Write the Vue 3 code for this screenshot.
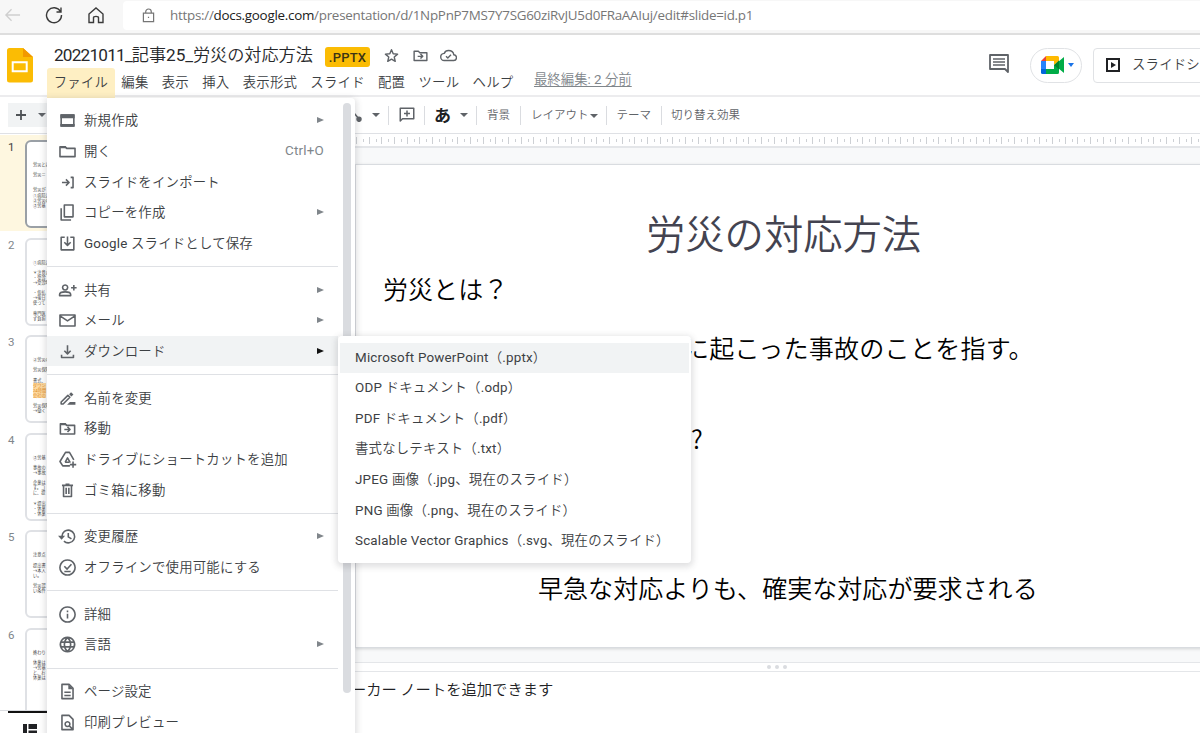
<script setup>
  /**
  * Presentation editor with the File menu open
  *
  * Browser bar, document header, toolbar, filmstrip and slide canvas.
  * The File menu and its Download submenu lie over the page.
  */

  // Outline icons on a 24px grid, `s` is stroked and `f` is filled
  const icons = {
    window: { s: 'M4 5h16v14H4z', f: 'M3 4h18v5H3zM3 16.500h18V20H3z' },
    folder: { s: 'M2.500 18.500V6h6.500l2 2h10.500v10.500z', f: 'M3 5h6.500l2 3H3z' },
    import: { s: 'M5 12h8.500M10 8l4 4-4 4M16 5.500h3v13H16' },
    copy: { s: 'M8 2.500h11v15H8zM4 6.500V21.500h12.500' },
    save: { s: 'M8.500 4H4v16h16V4h-4.500M12 3v11M8 10.500l4 4 4-4' },
    share: { s: 'M9 5a3.200 3.200 0 1 0 .01 0zM2 18.500v-1.500c0-2.500 4-3.300 7-3.300s7 .8 7 3.300v1.500zM20 5v7M16.500 8.500h7' },
    mail: { s: 'M2.500 5h19v14h-19zM3 6.500l9 6 9-6' },
    download: { s: 'M12 4v10.500M8 11l4 4 4-4M4.500 16V19.500h15V16' },
    rename: { s: 'M4 19v-2.500L12.500 8l2.500 2.500L6.500 19z', f: 'M14 6.500l2.500-2.500L19.500 7 17 9.500zM11.500 20h10.500v-3.500h-7z' },
    move: { s: 'M3 19V6h6l2 2h10v11zM8 13.200h6.500M12 10l3.200 3.200-3.200 3.200', f: 'M3 5h6.500l2 3H3z' },
    shortcut: { s: 'M15 20H6l-3.500-5.500L9.500 3h5l5.500 9.500M9 15.500h5M9 15.500l3-5.500 3.500 6M19 14.500v8M15 18.500h8' },
    trash: { s: 'M7 5.500v14h10v-14M5 5.500h14M9.500 4h5M10.300 8.500v8M13.700 8.500v8' },
    history: { s: 'M5 12a8 8 0 1 1 2.500 5.800M13 7.500v5l4 2.500', f: 'M0 11h9l-4.500 5z' },
    offline: { s: 'M12 2.500a9.500 9.500 0 1 0 .01 0zM8 10.500l3.500 3.500L17 8M8 17h8' },
    info: { s: 'M12 2.500a9.500 9.500 0 1 0 .01 0zM12 11v6M12 7v2' },
    globe: { s: 'M12 3a9 9 0 1 0 .01 0zM12 3c-5.300 5-5.300 13 0 18M12 3c5.300 5 5.300 13 0 18M4 9h16M4 15h16' },
    page: { s: 'M5 3h9l5 5v13H5zM8 13h8M8 17h8', f: 'M13 3v6h6z' },
    preview: { s: 'M5 3h9l5 5v13H5zM12 11a3 3 0 1 0 .01 0zM14 16l4.500 4.500' },
    star: { s: 'M12 3.800l2.400 5.800 6.200.500-4.700 4.100 1.400 6.100L12 17.100l-5.300 3.200 1.400-6.100-4.700-4.100 6.200-.500z' },
    cloud: { s: 'M6 19h13a4 4 0 0 0 .500-8C19 7.500 16 5 12 5c-2.800 0-5 1.600-6 4-2.800.300-5 2.300-5 5s2.200 5 5 5zM8.500 13l2.500 2.500 4.500-4.500' },
    addComment: { s: 'M3 3h18v14H6l-3 3zM12 6v8M8 10h8' }
  };

  const menus = ['ファイル', '編集', '表示', '挿入', '表示形式', 'スライド', '配置', 'ツール', 'ヘルプ'];

  const fileMenu = [
    [
      { icon: 'window', label: '新規作成', sub: true },
      { icon: 'folder', label: '開く', keys: 'Ctrl+O' },
      { icon: 'import', label: 'スライドをインポート' },
      { icon: 'copy', label: 'コピーを作成', sub: true },
      { icon: 'save', label: 'Google スライドとして保存' }
    ],
    [
      { icon: 'share', label: '共有', sub: true },
      { icon: 'mail', label: 'メール', sub: true },
      { icon: 'download', label: 'ダウンロード', sub: true, active: true }
    ],
    [
      { icon: 'rename', label: '名前を変更' },
      { icon: 'move', label: '移動' },
      { icon: 'shortcut', label: 'ドライブにショートカットを追加' },
      { icon: 'trash', label: 'ゴミ箱に移動' }
    ],
    [
      { icon: 'history', label: '変更履歴', sub: true },
      { icon: 'offline', label: 'オフラインで使用可能にする' }
    ],
    [
      { icon: 'info', label: '詳細' },
      { icon: 'globe', label: '言語', sub: true }
    ],
    [
      { icon: 'page', label: 'ページ設定' },
      { icon: 'preview', label: '印刷プレビュー' }
    ]
  ];

  const formats = [
    'Microsoft PowerPoint（.pptx）',
    'ODP ドキュメント（.odp）',
    'PDF ドキュメント（.pdf）',
    '書式なしテキスト（.txt）',
    'JPEG 画像（.jpg、現在のスライド）',
    'PNG 画像（.png、現在のスライド）',
    'Scalable Vector Graphics（.svg、現在のスライド）'
  ];

  // Lines starting with * are highlighted in the thumbnail
  const thumbs = [
    ['労災とは', '', '労災＝', '', '', '労災が', '①病院に', '②労災の', '③労基'],
    ['①病院に', '', '＊注意点', '・受診', '→受診時', '', '・仮払', '→後日', '使って', '', '専門医', 'ず負担'],
    ['②労災の', '', '労災保険', '', '書式、', '*ダウン', '*24時間', '*会社の', '', '労災保険', '→働く'],
    ['③労基', '', '事故の', '→事故', '', '企業は', 'す。コ', 'に、提', '', '＊提出', '・休業', '・休業'],
    ['注意点', '', '提出書', '→本人', 'い。', '', '労災認', 'い条件'],
    ['終わり', '', '休業は', '→労基', 'と、お', '休業は']
  ];
</script>

<template>
  <div class="screen">
    <!-- Browser bar -->
    <div class="browser">
      <svg class="nav back" viewBox="0 0 18 18"><path d="M17 9H2M8 3L2 9l6 6" /></svg>
      <svg class="nav reload" viewBox="0 0 18 18"><path d="M15.500 5.500A7.500 7.500 0 1 0 16.500 9M16 1.500v4.500h-4.500" /></svg>
      <svg class="nav home" viewBox="0 0 18 18"><path d="M2 8l7-6 7 6v8.500h-4.500v-5c0-1.500-5-1.500-5 0v5H2z" /></svg>
      <div class="address">
        <svg class="lock" viewBox="0 0 14 16"><path d="M1.500 5.500h11v9h-11zM4 5.500V4a3 3 0 0 1 6 0v1.500M7 9.300v1.500" /></svg>
        <span class="url">https://<b>docs.google.com</b>/presentation/d/1NpPnP7MS7Y7SG60ziRvJU5d0FRaAAIuj/edit#slide=id.p1</span>
      </div>
    </div>

    <!-- Document header -->
    <header class="header">
      <svg class="logo" viewBox="0 0 26 35">
        <path fill="#fbbc04" d="M2.500 0H16l10 9v23a2.500 2.500 0 0 1-2.500 2.500h-21A2.500 2.500 0 0 1 0 32V2.500A2.500 2.500 0 0 1 2.500 0z" />
        <path fill="#f29900" d="M16 0l10 9H16z" />
        <path fill="none" stroke="#fff" stroke-width="2" d="M5.700 14.200h14v9h-14z" />
      </svg>
      <div class="doc">
        <div class="title-row">
          <span class="title"><span class="date">20221011_</span>記事25_労災の対応方法</span>
          <span class="badge">.PPTX</span>
          <svg v-for="name in ['star', 'move', 'cloud']" :key="name" class="icon small" viewBox="0 0 24 24">
            <path class="line" :d="icons[name].s" />
          </svg>
        </div>
        <nav class="menubar">
          <span v-for="(menu, i) in menus" :key="menu" class="menu" :class="{ open: i === 0 }">{{ menu }}</span>
          <span class="last-edit">最終編集: 2 分前</span>
        </nav>
      </div>
      <div class="actions">
        <svg class="comments" viewBox="0 0 20 20">
          <path fill="none" stroke="#5f6368" stroke-width="1.800" stroke-linejoin="round" d="M1 1h18v17l-3-3H1z" />
          <path stroke="#5f6368" stroke-width="1.700" d="M4 5h12M4 8h12M4 11h12" />
        </svg>
        <div class="meet">
          <svg viewBox="0 0 24 20">
            <path fill="#ea4335" d="M6 1v5H1z" />
            <path fill="#2684fc" d="M1 6h5v8H1z" />
            <path fill="#0066da" d="M1 14h5v5H2.500A1.500 1.500 0 0 1 1 17.500z" />
            <path fill="#ffba00" d="M6 1h11.500A1.500 1.500 0 0 1 19 2.500V6l-5 4V6H6z" />
            <path fill="#00ac47" d="M6 14h8v-4l5-1v8.500a1.500 1.500 0 0 1-1.500 1.500H6zM18 7l6-5v16l-6-5z" />
            <path fill="#00832d" d="M14 10l5-4.500v9z" />
          </svg>
          <i class="caret blue"></i>
        </div>
        <div class="slideshow">
          <svg viewBox="0 0 16 16">
            <path fill="none" stroke="#202124" stroke-width="2" d="M2 2h12v12H2z" />
            <path fill="#202124" d="M6 5l5 3-5 3z" />
          </svg>
          <span>スライドショー</span>
        </div>
      </div>
    </header>

    <!-- Toolbar -->
    <div class="toolbar">
      <div class="new-slide">
        <svg viewBox="0 0 12 12"><path d="M6 1v10M1 6h10" /></svg>
        <i class="caret"></i>
      </div>
      <div class="tools">
        <svg class="tail" viewBox="0 0 8 10"><path d="M0 1l5 6" /><circle cx="5" cy="7.300" r="2" /></svg>
        <i class="caret line-caret"></i>
        <i class="rule"></i>
        <svg class="icon add-comment" viewBox="0 0 24 24"><path class="line" :d="icons.addComment.s" /></svg>
        <i class="rule"></i>
        <span class="kana">あ</span>
        <i class="caret kana-caret"></i>
        <i class="rule"></i>
        <span class="tool">背景</span>
        <i class="rule"></i>
        <span class="tool layout">レイアウト<i class="caret"></i></span>
        <i class="rule"></i>
        <span class="tool">テーマ</span>
        <i class="rule"></i>
        <span class="tool last">切り替え効果</span>
      </div>
    </div>

    <div class="work">
      <!-- Filmstrip -->
      <aside class="film">
        <div class="film-list">
          <div v-for="(lines, i) in thumbs" :key="i" class="film-row" :class="{ current: i === 0 }">
            <span class="num">{{ i + 1 }}</span>
            <div class="thumb">
              <div v-for="(text, n) in lines" :key="n" class="thumb-line">
                <span :class="{ marked: text[0] === '*' }">{{ text.replace('*', '') }}</span>
              </div>
            </div>
          </div>
        </div>
        <div class="film-foot">
          <div class="view-tab">
            <svg viewBox="0 0 14 12"><path d="M0 0h4v12H0zM5.500 0H14v5H5.500zM5.500 6.500H14V12H5.500z" /></svg>
          </div>
        </div>
      </aside>

      <!-- Slide canvas -->
      <main class="stage">
        <div class="ruler"></div>
        <div class="canvas">
          <div class="slide">
            <h1>労災の対応方法</h1>
            <p class="what">労災とは？</p>
            <p class="about">に起こった事故のことを指す。</p>
            <p class="question">?</p>
            <p class="closing">早急な対応よりも、確実な対応が要求される</p>
          </div>
        </div>
        <div class="handle"><i></i><i></i><i></i></div>
        <div class="notes">ーカー ノートを追加できます</div>
      </main>
    </div>

    <!-- File menu -->
    <div class="file-menu">
      <div v-for="(group, g) in fileMenu" :key="g" class="group">
        <div v-for="item in group" :key="item.label" class="item" :class="{ active: item.active }">
          <svg class="icon" viewBox="0 0 24 24">
            <path class="line" :d="icons[item.icon].s" />
            <path v-if="icons[item.icon].f" class="solid" :d="icons[item.icon].f" />
          </svg>
          <span class="label">{{ item.label }}</span>
          <span v-if="item.keys" class="keys">{{ item.keys }}</span>
          <i v-if="item.sub" class="arrow"></i>
        </div>
      </div>
      <div class="scrollbar"></div>
    </div>

    <!-- Download submenu -->
    <div class="submenu">
      <div v-for="(format, i) in formats" :key="format" class="format" :class="{ active: i === 0 }">{{ format }}</div>
    </div>
  </div>
</template>

<style>
  body {
    margin: 0;
    overflow: hidden;
  }
</style>

<style scoped>
  .screen {
    position: relative;
    display: flex;
    flex-direction: column;
    width: 1200px;
    height: 733px;
    overflow: hidden;
    background: #fff;
    color: #3c4043;
    font-family: Roboto, "Noto Sans CJK JP DemiLight", "Noto Sans CJK JP", sans-serif;
    font-size: 13.4px;
    letter-spacing: 0.2px;
    white-space: nowrap;
  }

  .screen * {
    box-sizing: border-box;
  }

  svg {
    display: block;
    flex: none;
  }

  /* Browser bar */
  .browser {
    display: flex;
    align-items: flex-start;
    flex: none;
    height: 35px;
    padding-left: 4px;
    background: #f7f7f7;
    border-bottom: 2px solid #dedede;
  }

  .nav {
    width: 18px;
    height: 18px;
    margin-top: 6px;
    fill: none;
    stroke: #3b3b3b;
    stroke-width: 1.4;
  }

  .back {
    width: 17px;
    stroke: #cfcfcf;
  }

  .reload {
    margin-left: 24px;
  }

  .home {
    margin-left: 24px;
  }

  .address {
    display: flex;
    align-items: center;
    flex: 1;
    height: 29px;
    margin: 1px 0 0 18px;
    padding-left: 19px;
    background: #fff;
    border-radius: 4px 0 0 4px;
  }

  .lock {
    width: 13px;
    height: 15px;
    margin-top: -1px;
    fill: none;
    stroke: #767676;
    stroke-width: 1.3;
  }

  .url {
    margin: -2px 0 0 15px;
    color: #767676;
    font-family: "Open Sans", sans-serif;
    font-size: 13.4px;
    letter-spacing: -0.265px;
  }

  .url b {
    color: #202020;
    font-weight: 400;
  }

  /* Header */
  .header {
    display: flex;
    flex: none;
    height: 62px;
    padding-left: 7px;
    border-bottom: 2px solid #ececee;
  }

  .logo {
    width: 26px;
    height: 35px;
    margin-top: 13px;
  }

  .doc {
    margin-left: 14px;
  }

  .title-row {
    display: flex;
    align-items: center;
    height: 26px;
    margin-top: 8px;
    padding-left: 7px;
  }

  .title {
    width: 259px;
    margin-top: -2px;
    color: #27282b;
    font-size: 17.2px;
    line-height: 26px;
    letter-spacing: -0.07px;
  }

  .date {
    letter-spacing: -0.8px;
  }

  .badge {
    width: 45px;
    height: 20px;
    margin: 1px 13px 0 12px;
    background: #fbbc04;
    border-radius: 3px;
    color: #3c3415;
    font-size: 13px;
    font-weight: 500;
    line-height: 21px;
    text-align: center;
  }

  .icon {
    width: 19px;
    height: 19px;
  }

  .icon .line {
    fill: none;
    stroke: #5f6368;
    stroke-linejoin: round;
    stroke-width: 2;
  }

  .icon .solid {
    fill: #5f6368;
  }

  .small {
    width: 17px;
    height: 17px;
    margin: -2px 11.600px 0 0;
  }

  .menubar {
    display: flex;
    height: 30px;
    margin-top: -1px;
  }

  .menu {
    padding: 0 6.650px;
    line-height: 29px;
  }

  .menu.open {
    background: #feefc3;
    border-radius: 3px 3px 0 0;
  }

  .last-edit {
    margin-left: 14px;
    color: #80868b;
    line-height: 23px;
    letter-spacing: 0;
    text-decoration: underline;
    text-underline-offset: 2px;
  }

  .actions {
    display: flex;
    margin: 13px 0 0 auto;
    width: 211px;
  }

  .comments {
    width: 20px;
    height: 20px;
    margin-top: 6px;
  }

  .meet {
    display: flex;
    align-items: center;
    gap: 4px;
    flex: none;
    width: 52px;
    height: 35px;
    margin-left: 21px;
    padding: 0 0 1px 9px;
    border: 1px solid #e0e2e5;
    border-radius: 18px;
  }

  .meet svg {
    width: 24px;
    height: 20px;
  }

  .slideshow {
    display: flex;
    align-items: center;
    gap: 11px;
    flex: none;
    width: 150px;
    height: 35px;
    margin-left: 11px;
    padding: 0 0 2px 11px;
    border: 1px solid #e0e2e5;
    border-radius: 4px;
  }

  .slideshow span {
    margin-top: -3px;
  }

  .slideshow svg {
    width: 16px;
    height: 16px;
  }

  .caret {
    display: inline-block;
    flex: none;
    border: 4px solid transparent;
    border-top-color: #5f6368;
    border-bottom: 0;
  }

  .caret.blue {
    border-width: 4px 3.500px 0;
    border-top-color: #1a73e8;
  }

  /* Toolbar */
  .toolbar {
    display: flex;
    align-items: center;
    flex: none;
    height: 37px;
    padding-left: 8px;
    border-bottom: 1px solid #dfe1e5;
  }

  .new-slide {
    display: flex;
    align-items: center;
    gap: 11px;
    width: 47px;
    height: 24px;
    padding-left: 7px;
    background: #f1f3f4;
  }

  .new-slide svg {
    width: 12px;
    height: 12px;
    fill: none;
    stroke: #4f5357;
    stroke-width: 1.8;
  }

  .tools {
    display: flex;
    align-items: center;
    margin-left: 299px;
  }

  .tail {
    width: 8px;
    height: 10px;
    margin-top: 4px;
    fill: #5f6368;
    stroke: #5f6368;
    stroke-width: 1.5;
  }

  .line-caret {
    margin: 0 8px 0 10px;
  }

  .rule {
    width: 1px;
    height: 19px;
    background: #dadce0;
  }

  .add-comment {
    width: 18px;
    height: 18px;
    margin: 0 8.500px;
  }

  .kana {
    width: 17px;
    margin-left: 9px;
    color: #202124;
    font-family: "Noto Sans CJK JP", sans-serif;
    font-size: 17px;
    font-weight: 700;
    line-height: 24px;
    letter-spacing: 0;
  }

  .kana-caret {
    margin: 0 8px 0 9px;
  }

  .tool {
    margin-top: -2px;
    padding: 0 10px;
    color: #5f6368;
    font-size: 11.5px;
    letter-spacing: 0;
  }

  .tool .caret {
    margin-left: 1px;
    vertical-align: 1px;
  }

  .layout {
    padding-right: 8px;
  }

  .last {
    padding-left: 9px;
  }

  /* Filmstrip */
  .work {
    display: flex;
    flex: 1;
    min-height: 0;
  }

  .film {
    display: flex;
    flex-direction: column;
    flex: none;
    width: 155px;
    overflow: hidden;
  }

  .film-list {
    flex: 1;
    min-height: 0;
    overflow: hidden;
  }

  .film-row {
    display: flex;
    height: 97.6px;
    padding-top: 6px;
  }

  .film-row.current {
    background: linear-gradient(#fff 1.500px, #fef7e0 1.500px, #fef7e0 97px, #fff 97px);
  }

  .num {
    flex: none;
    width: 25px;
    padding-left: 8px;
    color: #80868b;
    font-size: 11.5px;
    line-height: 15px;
  }

  .current .num {
    color: #3c4043;
  }

  .thumb {
    flex: none;
    width: 150px;
    height: 88px;
    padding: 20px 0 0 6px;
    background: #fff;
    border: 2px solid #dfe1e5;
    border-radius: 6px;
  }

  .current .thumb {
    border-color: #9aa0a6;
  }

  .thumb-line {
    height: 5.1px;
    color: #333;
    font-size: 4.2px;
    line-height: 5.1px;
    letter-spacing: 0;
  }

  .marked {
    background: #fdd9a0;
    color: #e08a1e;
  }

  .film-foot {
    flex: none;
    height: 23px;
    padding-left: 8px;
    border-top: 1px solid #dadce0;
  }

  .view-tab {
    padding: 11px 0 0 15px;
    border-top: 2px solid #111;
  }

  .view-tab svg {
    width: 14px;
    height: 12px;
    fill: #202124;
  }

  /* Stage */
  .stage {
    display: flex;
    flex-direction: column;
    flex: 1;
    min-width: 0;
    padding-left: 200px;
  }

  .ruler {
    flex: none;
    height: 14px;
    border-bottom: 2px solid #e4e6e9;
    background:
      repeating-linear-gradient(90deg, #cdd0d4 0 1px, transparent 1px 12.656px) 1.300px 3px / 100% 7px no-repeat,
      repeating-linear-gradient(90deg, #cdd0d4 0 1px, transparent 1px 12.656px) 7.600px 5px / 100% 3px no-repeat;
  }

  .canvas {
    flex: none;
    height: 514px;
    padding-top: 16px;
    background: #f8f9fa;
  }

  .slide {
    display: flex;
    flex-direction: column;
    height: 484px;
    width: 860px;
    padding-left: 27px;
    background: #fff;
    border: 1px solid #d9dce0;
    box-shadow: 0 1px 3px rgba(60, 64, 67, 0.2);
    color: #000;
    font-family: "Noto Sans CJK JP DemiLight", "Noto Sans CJK JP", sans-serif;
    font-size: 25.05px;
    letter-spacing: 0;
  }

  .slide h1,
  .slide p {
    margin: 0;
    line-height: 36px;
  }

  .slide h1 {
    margin: 38px 0 0 263px;
    color: #434350;
    font-size: 39.3px;
    font-weight: 400;
    line-height: 58px;
  }

  .slide .what {
    margin-top: 9px;
  }

  .slide .about {
    margin: 23px 0 0 301px;
    letter-spacing: 0.25px;
  }

  .slide .question {
    margin: 55px 0 0 308px;
  }

  .slide .closing {
    margin: 113px 0 0 155px;
  }

  .handle {
    display: flex;
    align-items: center;
    justify-content: center;
    gap: 4px;
    flex: none;
    height: 10px;
    padding-right: 1px;
    border: solid #e4e6e9;
    border-width: 1px 0;
  }

  .handle i {
    width: 4px;
    height: 4px;
    background: #dadce0;
    border-radius: 50%;
  }

  .notes {
    margin: 5px 0 0 -4px;
    color: #202124;
    font-family: "Noto Sans CJK JP DemiLight", "Noto Sans CJK JP", sans-serif;
    font-size: 15.3px;
    line-height: 22px;
    letter-spacing: 0;
  }

  /* File menu */
  .file-menu {
    position: absolute;
    top: 98px;
    left: 47px;
    width: 308px;
    height: 660px;
    padding-top: 7px;
    background: #fff;
    border-radius: 0 4px 4px 4px;
    box-shadow: 0 2px 6px 2px rgba(60, 64, 67, 0.16);
  }

  .group {
    width: 291px;
  }

  .group + .group {
    margin-top: 8px;
    padding-top: 7.100px;
    border-top: 1px solid #dfe1e5;
  }

  .item {
    display: flex;
    align-items: center;
    height: 30.65px;
    padding: 0 14px 0 11px;
  }

  .item .icon {
    margin-top: 1px;
  }

  .item.active {
    background: #f1f3f4;
  }

  .label {
    flex: 1;
    margin: -2px 0 0 7px;
  }

  .keys {
    color: #80868b;
  }

  .arrow {
    border: 3.500px solid transparent;
    border-left: 7px solid #80868b;
    border-right: 0;
  }

  .active .arrow {
    border-left-color: #111;
  }

  .scrollbar {
    position: absolute;
    top: 5px;
    left: 296px;
    width: 8px;
    height: 590px;
    background: #dadce0;
    border-radius: 4px;
  }

  .submenu {
    position: absolute;
    top: 336px;
    left: 338px;
    width: 353px;
    height: 227px;
    padding: 6.500px 2px;
    background: #fff;
    border-radius: 4px;
    box-shadow: 0 2px 6px 2px rgba(60, 64, 67, 0.16);
  }

  .format {
    height: 30.65px;
    padding-left: 15px;
    line-height: 30.5px;
  }

  .format.active {
    background: #f1f3f4;
  }
</style>
